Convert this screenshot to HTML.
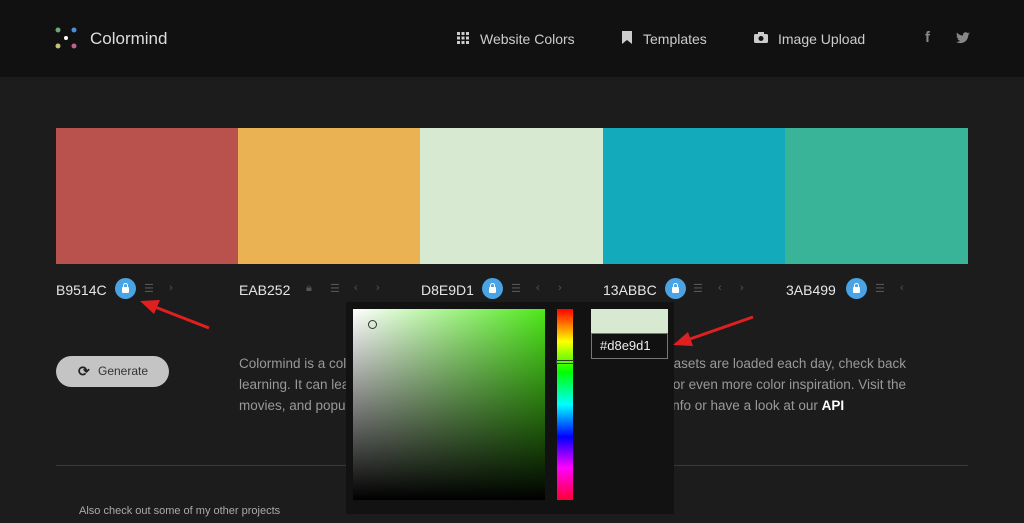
<!DOCTYPE html>
<html><head><style>
*{margin:0;padding:0;box-sizing:border-box}
body{width:1024px;height:523px;overflow:hidden;background:#1c1c1c;font-family:"Liberation Sans",sans-serif;position:relative;color:#ddd}
.hdr{position:absolute;left:0;top:0;width:1024px;height:77px;background:#111}
.abs{position:absolute}
.logo{left:90px;top:29px;font-size:17px;color:#ddd}
.nav{top:31px;font-size:14px;color:#ccc}
.sw{position:absolute;top:128px;height:136px}
.lbl{position:absolute;top:282px;font-size:14px;color:#e6e6e6}
.lock{position:absolute;top:278px;width:21px;height:21px;border-radius:50%;background:#4aa3e3}
.lock:after{content:"";position:absolute;left:7px;top:9px;width:7px;height:6px;background:#fff;border-radius:1px}
.lock:before{content:"";position:absolute;left:8px;top:5px;width:3px;height:5px;border:1.5px solid #fff;border-bottom:none;border-radius:3px 3px 0 0}
.ic{position:absolute;top:282px;font-size:11px;color:#555}
.t{position:absolute;font-size:13.5px;color:#999;white-space:nowrap;line-height:21px}
</style></head><body>
<div class="hdr"></div>
<svg class="abs" style="left:54px;top:26px" width="26" height="26">
<circle cx="4" cy="4" r="2.5" fill="#6aa87a"/><circle cx="20" cy="4" r="2.5" fill="#4a8fd8"/>
<circle cx="12" cy="12" r="2" fill="#fff"/><circle cx="4" cy="20" r="2.5" fill="#c8c070"/><circle cx="20" cy="20" r="2.5" fill="#c06090"/></svg>
<div class="abs logo">Colormind</div>
<svg class="abs" style="left:457px;top:32px" width="12" height="12" fill="#ccc"><rect x="0" y="0" width="3" height="3"/><rect x="4.5" y="0" width="3" height="3"/><rect x="9" y="0" width="3" height="3"/><rect x="0" y="4.5" width="3" height="3"/><rect x="4.5" y="4.5" width="3" height="3"/><rect x="9" y="4.5" width="3" height="3"/><rect x="0" y="9" width="3" height="3"/><rect x="4.5" y="9" width="3" height="3"/><rect x="9" y="9" width="3" height="3"/></svg>
<div class="abs nav" style="left:480px">Website Colors</div>
<svg class="abs" style="left:622px;top:31px" width="10" height="13"><path d="M0 0H10V13L5 9L0 13Z" fill="#ccc"/></svg>
<div class="abs nav" style="left:643px">Templates</div>
<svg class="abs" style="left:754px;top:32px" width="14" height="11"><rect x="0" y="2" width="14" height="9" rx="1.5" fill="#ccc"/><rect x="4" y="0" width="6" height="3" fill="#ccc"/><circle cx="7" cy="6.5" r="2.5" fill="#111"/></svg>
<div class="abs nav" style="left:778px">Image Upload</div>
<div class="abs" style="left:925px;top:29px;font-size:15px;color:#888;font-weight:bold">f</div>
<svg class="abs" style="left:956px;top:32px" width="14" height="12"><path d="M14 1.5c-.5.2-1 .4-1.6.4.6-.4 1-.9 1.2-1.5-.5.3-1.1.5-1.8.7C11.2.5 10.5.2 9.7.2 8.2.2 6.9 1.4 6.9 3c0 .2 0 .4.1.6C4.6 3.5 2.5 2.4 1 .6.8 1 .6 1.5.6 2c0 1 .5 1.8 1.2 2.3-.4 0-.9-.1-1.2-.3 0 1.4 1 2.5 2.2 2.7-.4.1-.9.2-1.3.1.4 1.1 1.4 1.900 2.6 1.9-1 .8-2.2 1.2-3.5 1.2H0c1.2.8 2.700 1.2 4.3 1.2 5.2 0 8-4.3 8-8v-.4c.7-.4 1.2-.9 1.7-1.5z" fill="#888"/></svg>

<div class="sw" style="left:56px;width:183px;background:#b9514c"></div>
<div class="sw" style="left:238px;width:183px;background:#eab252"></div>
<div class="sw" style="left:420px;width:184px;background:#d8e9d1"></div>
<div class="sw" style="left:603px;width:183px;background:#13abbc"></div>
<div class="sw" style="left:785px;width:183px;background:#3ab499"></div>

<div class="lbl" style="left:56px">B9514C</div><div class="lock" style="left:115px"></div><div class="ic" style="left:144px">☰</div><div class="ic" style="left:169px">›</div>
<div class="lbl" style="left:239px">EAB252</div><div class="ic" style="left:306px">🔒︎</div><div class="ic" style="left:330px">☰</div><div class="ic" style="left:354px">‹</div><div class="ic" style="left:376px">›</div>
<div class="lbl" style="left:421px">D8E9D1</div><div class="lock" style="left:482px"></div><div class="ic" style="left:511px">☰</div><div class="ic" style="left:536px">‹</div><div class="ic" style="left:558px">›</div>
<div class="lbl" style="left:603px">13ABBC</div><div class="lock" style="left:665px"></div><div class="ic" style="left:693px">☰</div><div class="ic" style="left:718px">‹</div><div class="ic" style="left:740px">›</div>
<div class="lbl" style="left:786px">3AB499</div><div class="lock" style="left:846px"></div><div class="ic" style="left:875px">☰</div><div class="ic" style="left:900px">‹</div>

<div class="abs" style="left:56px;top:356px;width:113px;height:31px;border-radius:16px;background:#c4c4c4;color:#333;font-size:12px;line-height:31px;padding-left:42px">Generate</div>
<div class="abs" style="left:78px;top:363px;font-size:14px;color:#222;font-weight:bold">⟳</div>

<div class="t" style="left:239px;top:353px">Colormind is a color scheme generator</div>
<div class="t" style="left:239px;top:374px">learning. It can learn color styles</div>
<div class="t" style="left:239px;top:395px">movies, and popular art</div>
<div class="t" style="right:118px;top:353px">datasets are loaded each day, check back</div>
<div class="t" style="right:118px;top:374px">for even more color inspiration. Visit the</div>
<div class="t" style="left:640px;top:395px">tech info or have a look at our <b style="color:#fff">API</b></div>
<div class="abs" style="left:56px;top:465px;width:912px;height:1px;background:#3a3a3a"></div>
<div class="abs" style="left:79px;top:505px;font-size:11px;color:#aaa">Also check out some of my other projects</div>

<div class="abs" style="left:346px;top:302px;width:328px;height:212px;background:#121212"></div>
<div class="abs" style="left:353px;top:309px;width:192px;height:191px;background:linear-gradient(to bottom,rgba(0,0,0,0),#000),linear-gradient(to right,#fff,#4ee81a)"></div>
<div class="abs" style="left:368px;top:320px;width:9px;height:9px;border:1.5px solid #333;border-radius:50%"></div>
<div class="abs" style="left:557px;top:309px;width:16px;height:191px;background:linear-gradient(to bottom,#f00,#ff0 17%,#0f0 33%,#0ff 50%,#00f 67%,#f0f 83%,#f03)"></div>
<div class="abs" style="left:556px;top:360px;width:18px;height:4px;border:1px solid #333"></div>
<div class="abs" style="left:591px;top:309px;width:77px;height:25px;background:#d8e9d1"></div>
<div class="abs" style="left:591px;top:333px;width:77px;height:26px;border:1px solid #777;background:#111;color:#eee;font-size:13px;line-height:24px;padding-left:8px">#d8e9d1</div>

<svg class="abs" style="left:0;top:0" width="1024" height="523"><g stroke="#e02020" stroke-width="3" fill="#e02020">
<line x1="209" y1="328" x2="155" y2="307"/><path d="M140 301L160 300L154 314Z" stroke="none"/>
<line x1="753" y1="317" x2="690" y2="339"/><path d="M673 345L688 332L693 346Z" stroke="none"/></g></svg>
</body></html>
